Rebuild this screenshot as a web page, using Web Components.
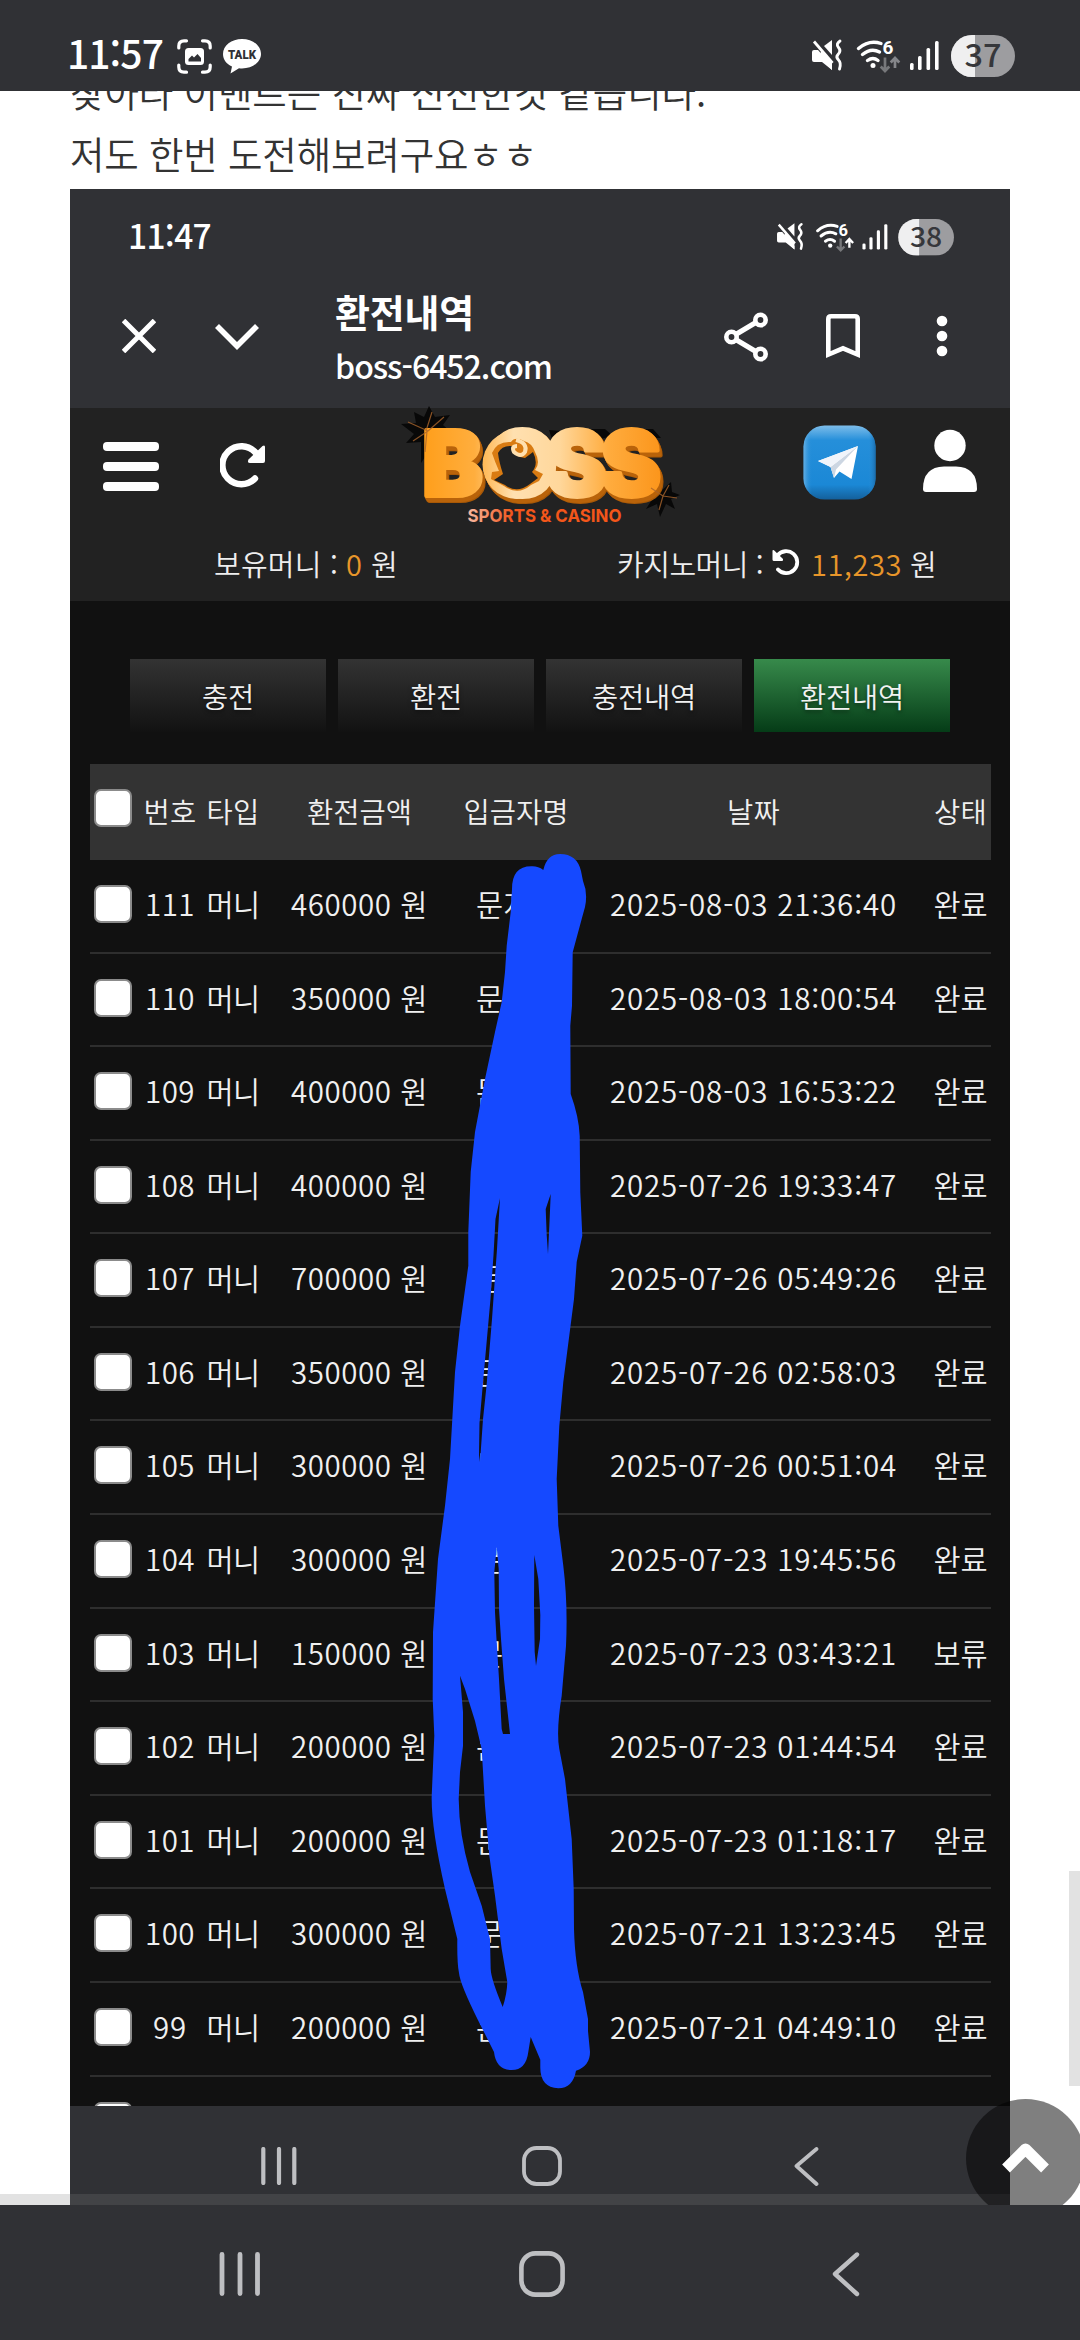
<!DOCTYPE html>
<html lang="ko">
<head>
<meta charset="utf-8">
<title>환전내역</title>
<style>
html,body{margin:0;padding:0;background:#fff}
body{width:1080px;height:2340px;overflow:hidden;font-family:"Noto Sans CJK KR","Noto Sans",sans-serif}
</style>
</head>
<body>
<phone-screen></phone-screen>
<script>
const define = (name, html, setup) => customElements.define(name, class extends HTMLElement {
  connectedCallback() {
    if (this.shadowRoot) return;
    const root = this.attachShadow({mode: 'open'});
    root.innerHTML = typeof html === 'function' ? html(this) : html;
    if (setup) setup(this, root);
  }
});

define('phone-screen', `
<style>
:host{display:flex;flex-direction:column;width:1080px;height:2340px;overflow:hidden;background:#fff}
.view{position:relative;height:2114px;overflow:hidden;background:#fff}
.vbar{position:absolute;left:1069px;top:1780px;width:11px;height:215px;background:#e2e2e2}
.hbar{position:absolute;left:0;top:2103px;width:1010px;height:11px;background:rgba(128,128,128,.23)}
.fab{position:absolute;left:966px;top:2008px;width:119px;height:119px;border-radius:50%;background:rgba(0,0,0,.5)}
.fab svg{display:block}
</style>
<status-bar></status-bar>
<div class="view">
  <post-body></post-body>
  <div class="vbar"></div>
  <div class="hbar"></div>
  <div class="fab"><svg width="119" height="119" viewBox="0 0 119 119"><path d="M40 69.500 L59.500 50 L79 69.500" fill="none" stroke="#fff" stroke-width="11" stroke-linejoin="round"/></svg></div>
</div>
<nav-bar></nav-bar>`);

define('status-bar', `
<style>
:host{display:flex;align-items:flex-start;height:91px;background:#303135;color:#fff}
svg{display:block;flex:none}
.t{font-size:39px;line-height:56px;font-weight:500;margin:24px 0 0 67px}
.i1{margin:39px 0 0 14px}.i2{margin:39px 0 0 11px}
.sp{flex:1}
signal-icons{margin:35px 65px 0 0}
</style>
<fit-text class="t" w="96">11:57</fit-text>
<svg class="i1" width="35" height="35" viewBox="0 0 35 35" fill="none" stroke="#fff" stroke-width="3.200" stroke-linecap="round"><path d="M1.800 9V7Q1.800 1.800 7 1.800H9.500M25.500 1.800H28Q33.200 1.800 33.200 7V9M33.200 26V28Q33.200 33.200 28 33.200H25.500M9.500 33.200H7Q1.800 33.200 1.800 28V26"/><rect x="8" y="9" width="19" height="17" rx="3.500" fill="#fff" stroke="none"/><path d="M11.500 22.500V20L15 16.500L17 18.500L20.500 15L24 19V22.500Z" fill="#303135" stroke="none"/></svg>
<svg class="i2" width="38" height="36" viewBox="0 0 38 36"><path d="M19 0C8.500 0 0 6.500 0 15C0 20.500 3.500 25 9 27.500L7.500 34.500L16 29.300Q17.500 29.500 19 29.500C29.500 29.500 38 23 38 15C38 6.500 29.500 0 19 0Z" fill="#fff"/><text x="5" y="19.500" font-family="Roboto,sans-serif" font-weight="900" font-size="12.500" textLength="28" lengthAdjust="spacingAndGlyphs" fill="#303135">TALK</text></svg>
<span class="sp"></span>
<signal-icons level="37" width="203"></signal-icons>`);

// Mute, Wi-Fi 6, signal and battery drawn on a 203x42 grid.
define('signal-icons', el => {
  const w = +el.getAttribute('width'), up = el.getAttribute('up') || '#85868a';
  return `
<style>:host{display:block}svg{display:block;overflow:visible}</style>
<svg width="${w}" height="${w * 42 / 203}" viewBox="0 0 203 42">
<g fill="#fff">
<path d="M0 17Q0 15 2 15H6L20 31V35L10 27H2Q0 27 0 25Z"/><path d="M12 11L20 5V20Z"/><path d="M7 22L20 35V24L10 14Z"/>
</g>
<path d="M3.500 5.500L22 27" stroke="#303135" stroke-width="2.200"/>
<path d="M2 6.500L20.500 28" stroke="#fff" stroke-width="2.800"/>
<path d="M28 6Q23.500 9 26.500 12.500T26 19.500Q23.500 22 26.500 25T27.500 34" fill="none" stroke="#fff" stroke-width="2.900" stroke-linecap="round"/>
<g fill="none" stroke="#fff" stroke-width="3.400" stroke-linecap="round"><path d="M46.500 13.500Q57 4.500 69 8.500"/><path d="M50.500 19.500Q59 12.500 67.500 17"/><path d="M55.500 25.500Q61 21.500 66 25.500"/></g>
<circle cx="61" cy="30.500" r="2.500" fill="#fff"/>
<text x="70.500" y="19" font-family="Roboto,sans-serif" font-weight="700" font-size="19" fill="#fff">6</text>
<path d="M73 22.500V36M68.700 31.500L73 36L77.300 31.500" fill="none" stroke="#77787b" stroke-width="2.700"/>
<path d="M83 33V23.500M78.700 27.500L83 23L87.300 27.500" fill="none" stroke="${up}" stroke-width="2.700"/>
<g fill="#fff"><rect x="98" y="28" width="3.600" height="7" rx="1.500"/><rect x="106" y="21" width="3.600" height="14" rx="1.500"/><rect x="114.500" y="13" width="3.600" height="22" rx="1.500"/><rect x="123" y="6" width="3.600" height="29" rx="1.500"/></g>
<clipPath id="b"><rect x="139" y="0" width="64" height="42" rx="21"/></clipPath>
<g clip-path="url(#b)"><rect x="139" width="64" height="42" fill="#9d9da0"/><rect x="139" width="24" height="42" fill="#efeff0"/></g>
<text x="171" y="32" text-anchor="middle" textLength="37" lengthAdjust="spacingAndGlyphs" font-family="Noto Sans CJK KR,sans-serif" font-weight="500" font-size="31" fill="#36373b">${el.getAttribute('level')}</text>
</svg>`;
});

define('nav-bar', `
<style>
:host{display:flex;height:135px;background:#303135}
svg{display:block;flex:none}
.r{margin:46px 0 0 219px}.h{margin:46px 0 0 258px}.b{margin:46px 0 0 265px}
</style>
<svg class="r" width="42" height="46" viewBox="0 0 42 46"><path d="M3 3.500V42.500M21 3.500V42.500M38.500 3.500V42.500" stroke="#bebfc2" stroke-width="4.800" stroke-linecap="round"/></svg>
<svg class="h" width="46" height="46" viewBox="0 0 46 46"><rect x="2.400" y="2.400" width="41.200" height="41.200" rx="14" fill="none" stroke="#bebfc2" stroke-width="4.600"/></svg>
<svg class="b" width="32" height="46" viewBox="0 0 32 46"><path d="M27 3.500L5 23L27 43" fill="none" stroke="#bebfc2" stroke-width="4.400" stroke-linecap="round" stroke-linejoin="round"/></svg>`);

define('post-body', `
<style>
:host{display:block;padding-left:70px}
.p{color:#333;font-size:37.500px;line-height:62px;font-weight:350;display:block}
.a{margin-top:-31px}
captured-shot{margin-top:5px}
</style>
<div class="p a"><fit-text w="636">찾아라 이벤트는 진짜 신선한것 같습니다.</fit-text></div>
<div class="p"><fit-text w="467">저도 한번 도전해보려구요ㅎㅎ</fit-text></div>
<captured-shot></captured-shot>`);

define('captured-shot', `
<style>
:host{display:flex;flex-direction:column;position:relative;width:940px;height:2016px;background:#111;overflow:hidden}
.body{height:1505px;overflow:hidden}
redaction-stroke{position:absolute;left:0;top:0}
</style>
<shot-toolbar></shot-toolbar>
<site-header></site-header>
<div class="body"><tab-row></tab-row><history-table></history-table></div>
<shot-nav></shot-nav>
<redaction-stroke></redaction-stroke>`);

define('shot-toolbar', `
<style>
:host{display:flex;flex-direction:column;height:219px;background:#303135;color:#fff}
svg{display:block;flex:none}
.s{display:flex;height:90px;align-items:flex-start}
.t{font-size:33.500px;line-height:48px;font-weight:500;margin:22px 0 0 58px}
.s signal-icons{margin:30px 56px 0 auto}
.b{display:flex;align-items:flex-start}
.x{margin:40px 0 0 52px}.v{margin:44px 0 0 58px}
.n{display:flex;flex-direction:column;margin:4px 0 0 75px;width:250px}
.n1{font-size:38px;line-height:56px;font-weight:700}
.n2{font-size:32px;line-height:46px;font-weight:500;margin-top:3px}
.sh{margin:32px 0 0 139px}.bk{margin:35px 0 0 58px}.d{margin:36px 0 0 76px}
</style>
<div class="s"><fit-text class="t" w="83">11:47</fit-text><signal-icons level="38" width="177" up="#fff"></signal-icons></div>
<div class="b">
<svg class="x" width="34" height="34" viewBox="0 0 34 34"><path d="M1.500 1.500L32.500 32.500M32.500 1.500L1.500 32.500" stroke="#fff" stroke-width="5"/></svg>
<svg class="v" width="46" height="28" viewBox="0 0 46 28"><path d="M3 3L23 23L43 3" fill="none" stroke="#fff" stroke-width="5.600"/></svg>
<div class="n"><fit-text class="n1" w="139">환전내역</fit-text><fit-text class="n2" w="217">boss-6452.com</fit-text></div>
<svg class="sh" width="44" height="52" viewBox="0 0 44 52"><g fill="none" stroke="#fff" stroke-width="4.600"><path d="M7.500 26L36 9M7.500 26L36 43" stroke-width="5"/><g fill="#303135"><circle cx="7.500" cy="26" r="5.200"/><circle cx="36.500" cy="9" r="5.200"/><circle cx="36.500" cy="43" r="5.200"/></g></g></svg>
<svg class="bk" width="34" height="45" viewBox="0 0 34 45"><path d="M2.300 40.500V5Q2.300 2.300 5 2.300H29Q31.700 2.300 31.700 5V40.500L17 34.300Z" fill="none" stroke="#fff" stroke-width="4.600"/></svg>
<svg class="d" width="12" height="42" viewBox="0 0 12 42" fill="#fff"><circle cx="6" cy="6" r="5.300"/><circle cx="6" cy="21" r="5.300"/><circle cx="6" cy="36" r="5.300"/></svg>
</div>`);

define('site-header', `
<style>
:host{display:flex;flex-direction:column;height:193px;background:#222;color:#eee}
svg{display:block;flex:none}
.top{display:flex;align-items:flex-start;height:118px}
.m{margin:34px 0 0 33px}.r{margin:35px 0 0 61px}
.l{margin:-3px 0 0 133px;overflow:visible}
.tg{margin:17px 0 0 121px}.u{margin:21px 0 0 47px}
.money{display:flex;align-items:flex-start;font-size:29px;line-height:44px;font-weight:350;padding-top:15px}
.o{color:#e8962a}
.a{margin-left:144px}.a0{margin-left:8px}.a1{margin-left:9px}
.b{margin-left:219px}.bi{margin:8px 0 0 9px}.b0{margin-left:11px}.b1{margin-left:8px}
</style>
<div class="top">
<svg class="m" width="56" height="49" viewBox="0 0 56 49" fill="#fff"><rect width="56" height="9" rx="4"/><rect y="20" width="56" height="9" rx="4"/><rect y="40" width="56" height="9" rx="4"/></svg>
<svg class="r" width="46" height="46" viewBox="0 0 46 46"><path d="M35 35.500A19 19 0 1 1 35.500 9.500" fill="none" stroke="#fff" stroke-width="6.400" stroke-linecap="round"/><path d="M45 4Q45 1.500 42.500 3L28.500 16.500Q27 20 30 20H43Q45 20 45 18Z" fill="#fff"/></svg>
<brand-logo class="l"></brand-logo>
<svg class="tg" width="73" height="75" viewBox="0 0 73 75">
<defs><linearGradient id="g" x1="0" y1="0" x2="0" y2="1"><stop offset="0" stop-color="#7dbdea"/><stop offset=".2" stop-color="#258fda"/><stop offset=".8" stop-color="#1b88d6"/><stop offset="1" stop-color="#14609b"/></linearGradient><linearGradient id="s" x1="0" x2="1" y1="0" y2="0"><stop offset="0" stop-color="#a9d4f2" stop-opacity=".5"/><stop offset=".12" stop-color="#2b90d9" stop-opacity="0"/><stop offset=".9" stop-color="#2b90d9" stop-opacity="0"/><stop offset="1" stop-color="#1a6cab"/></linearGradient></defs>
<rect x=".5" y=".5" width="72" height="74" rx="21" fill="url(#g)"/><rect x=".5" y=".5" width="72" height="74" rx="21" fill="url(#s)"/>
<path d="M15 36L55 21L48.500 54L36.500 46.500L31 53L27.500 42Z" fill="#fff"/><path d="M27.500 42L55 21L33 44.500L31 53Z" fill="#ccd6e2"/><path d="M15 36L55 21L27.500 42Z" fill="#f0f4fa"/></svg>
<svg class="u" width="54" height="63" viewBox="0 0 54 63" fill="#fff"><circle cx="27" cy="16.500" r="15.700"/><path d="M0 60Q0 38 21 37.500H33Q54 38 54 60Q54 63 51 63H3Q0 63 0 60Z"/></svg>
</div>
<div class="money">
<fit-text class="a" w="124">보유머니 :</fit-text><fit-text class="o a0" w="16">0</fit-text><fit-text class="a1" w="27">원</fit-text>
<fit-text class="b" w="146">카지노머니 :</fit-text>
<svg class="bi" width="28" height="27" viewBox="0 0 28 27"><path d="M5.500 6.500A11 11 0 1 1 6 20.500" fill="none" stroke="#fff" stroke-width="3.800" stroke-linecap="round"/><path d="M.5 1.500Q1 .5 2 1.300L11 10Q11.500 12 10 12H2Q.5 12 .5 10.500Z" fill="#fff"/></svg>
<fit-text class="o b0" w="91">11,233</fit-text><fit-text class="b1" w="27">원</fit-text>
</div>`);

define('brand-logo', `
<style>:host{display:block;flex:none}svg{display:block;overflow:visible}.face{filter:drop-shadow(1px 2px 0 #b9630a) drop-shadow(1px 2px 0 #b9630a) drop-shadow(1px 1px 0 #a85806)}</style>
<svg width="283" height="121" viewBox="398 405 283 121">
<defs>
<linearGradient id="f" gradientUnits="userSpaceOnUse" x1="425" x2="668" y1="0" y2="0"><stop offset="0" stop-color="#ff9f1c"/><stop offset=".2" stop-color="#ffae3e"/><stop offset=".36" stop-color="#ffe0b0"/><stop offset=".55" stop-color="#ffd79b"/><stop offset=".75" stop-color="#ffac3e"/><stop offset="1" stop-color="#fb9216"/></linearGradient>
<linearGradient id="t" gradientUnits="userSpaceOnUse" x1="467" x2="540" y1="0" y2="0"><stop offset="0" stop-color="#f7b9a0"/><stop offset=".6" stop-color="#f2571d"/><stop offset="1" stop-color="#f4561a"/></linearGradient>
</defs>
<g fill="#080808"><path d="M428 406L434 417L449 415L442 425L450 432L440 436L441 452L431 447L420 463L420 442L405 443L413 434L400 424L415 423L413 412L423 417Z"/>
<path d="M548 430L560 431L570 445H553ZM590 429H604L612 436L595 440ZM640 429H652L660 438H645Z"/>
<path d="M670 482L671 492L679 495L670 499L674 509L665 504L659 517L656 504L645 509L652 498L650 488L660 491Z"/></g>
<g class="face">
<text x="421 486 545 599.500" y="496" font-family="Inter,sans-serif" font-weight="900" font-size="91" stroke-linejoin="round" stroke-width="4" fill="url(#f)" stroke="url(#f)">BOSS</text>
<path fill-rule="evenodd" fill="url(#f)" d="M516 430A34.500 34.500 0 0 1 516 499A34.500 34.500 0 0 1 516 430Z"/>
</g>
<path d="M425 431L431 412M427 431L443 417M427 431L407 422M427 431L412 441M426 431L424 452M662 496L668 485M662 496L676 498M662 496L658 510M662 496L650 488" stroke="#a8642c" stroke-width="1.200" opacity=".8"/>
<path d="M491 453Q496 441 510 442Q514 436 523 441Q531 443 534 452Q540 463 534 470L542 474L538 481L530 485Q517 496 503 486L490 479L491 472L498 471Q494 462 491 453Z" fill="#d97b12"/>
<path d="M497 453Q501 445 511 446Q514 458 524 458L532 452Q538 464 531 472L537 478L529 484Q516 494 504 485L493 480L502 474Q498 462 497 453Z" fill="#222"/>
<path d="M515 440Q527 443 524 452Q520 458 513 452Q510 446 516 446" fill="none" stroke="#ffe0b0" stroke-width="4"/>
<text x="466.500" y="521.500" font-family="Inter,sans-serif" font-weight="700" font-size="18" textLength="154" lengthAdjust="spacingAndGlyphs" fill="url(#t)">SPORTS &amp; CASINO</text>
</svg>`);

define('tab-row', `
<style>
:host{display:flex;gap:12px;padding:58px 60px 0}
div{flex:1;height:73px;display:flex;justify-content:center;background:linear-gradient(#333,#121212);color:#f2f2f2;font-size:28.500px;line-height:73px;font-weight:350;text-shadow:0 2px 4px rgba(0,0,0,.5)}
.on{background:linear-gradient(#378a4b,#053c17)}
</style>
<div><fit-text w="52">충전</fit-text></div><div><fit-text w="52">환전</fit-text></div><div><fit-text w="104">충전내역</fit-text></div><div class="on"><fit-text w="104">환전내역</fit-text></div>`);

const records = [
  [111,460000,'2025-08-03 21:36:40'],[110,350000,'2025-08-03 18:00:54'],[109,400000,'2025-08-03 16:53:22'],
  [108,400000,'2025-07-26 19:33:47'],[107,700000,'2025-07-26 05:49:26'],[106,350000,'2025-07-26 02:58:03'],
  [105,300000,'2025-07-26 00:51:04'],[104,300000,'2025-07-23 19:45:56'],[103,150000,'2025-07-23 03:43:21','보류'],
  [102,200000,'2025-07-23 01:44:54'],[101,200000,'2025-07-23 01:18:17'],[100,300000,'2025-07-21 13:23:45'],
  [99,200000,'2025-07-21 04:49:10']];

define('history-table', () => `
<style>
:host{display:block;width:901px;margin:32px 0 0 20px;color:#f0f0f0;font-size:29.500px;font-weight:350}
.row,.head{display:grid;grid-template-columns:48px 64px 62px 191px 122px 353px 61px;box-sizing:border-box;justify-items:center;align-items:start}
.head{height:96px;background:#333;line-height:93px;font-size:28.500px}
.row{height:93.580px;border-bottom:2px solid #2e2e2e;line-height:87px}
i{justify-self:start;box-sizing:border-box;width:38px;height:38px;border-radius:7px;background:#fff;border:2.500px solid #8b8b8b;margin:25px 0 0 4px}
.n{justify-self:start;margin-left:21px}
</style>
<div class="head"><i></i><fit-text w="53">번호</fit-text><fit-text w="53">타입</fit-text><fit-text w="105">환전금액</fit-text><fit-text w="105">입금자명</fit-text><fit-text w="53">날짜</fit-text><fit-text w="53">상태</fit-text></div>
${records.map(([no, sum, date, state], k) => `<div class="row"><i></i><fit-text w="${no > 99 ? 50 : 34}">${no}</fit-text><fit-text w="53">머니</fit-text><fit-text w="137">${sum} 원</fit-text><span class="n">${k ? '문' : '문지'}</span><fit-text w="287">${date}</fit-text><fit-text w="54">${state || '완료'}</fit-text></div>`).join('')}
<div class="row"><i></i></div>`);

define('shot-nav', `
<style>
:host{display:flex;height:99px;background:#303135;flex:none}
svg{display:block;flex:none}
.r{margin:41px 0 0 190px}.h{margin:40px 0 0 224px}.b{margin:41px 0 0 230px}
</style>
<svg class="r" width="38" height="38" viewBox="0 0 38 38"><path d="M3.300 2V36M19 2V36M34.300 2V36" stroke="#bebfc2" stroke-width="4.200" stroke-linecap="round"/></svg>
<svg class="h" width="40" height="40" viewBox="0 0 40 40"><rect x="2" y="2" width="36" height="36" rx="12.500" fill="none" stroke="#bebfc2" stroke-width="3.800"/></svg>
<svg class="b" width="28" height="40" viewBox="0 0 28 40"><path d="M24.500 2L4.500 19L24.500 37" fill="none" stroke="#bebfc2" stroke-width="3.800" stroke-linecap="round" stroke-linejoin="round"/></svg>`);

// Freehand marker over the depositor column; the inner loops are gaps between strokes.
define('redaction-stroke', `
<style>:host{display:block;pointer-events:none}svg{display:block}</style>
<svg width="940" height="2016" viewBox="70 190 940 2016"><path fill="#1549ff" fill-rule="evenodd" d="
M512 890Q512 867 531.700 867.300Q538 867 543.300 871Q547 855 560 855Q577 855 581 872L583 882Q588 894 585 908L581.700 920L572.700 953.300L572 1006.700L570.300 1026.700L570.700 1095Q579 1118 579.700 1137L580.300 1193.300L582.300 1236.700L576.700 1263L574 1300L563.300 1383L559.300 1427L556.700 1480L558.300 1526.700L563.300 1566.700Q568 1605 566 1647L561.700 1696.700Q556 1732 559.300 1750L565 1780L571.700 1840L573.700 1890L574 1930Q575 1968 583 1993L588 2020V2032L590 2053Q590 2067 576 2071.700Q573 2089 558.300 2089.300Q540 2088 540.300 2068V2060.700L530.700 2038L528.300 2053Q526 2071 511.700 2071Q496 2071 494 2053L478.300 2021.700Q460 1985 459 1974Q457 1965 457.300 1940L445 1890Q431 1828 431.700 1796.700L434.300 1736.700L432.700 1700L433 1633L438 1560L445 1506.700L450 1460L455 1373L460 1326.700L468.300 1266.700V1233L470.700 1173L475 1133L485 1080L495 1033L501.700 1003L505 973L506.700 946.700L510.700 913Z
M500 1199L495.500 1220L493.500 1256L490.500 1300L482.700 1387L479.500 1424L479 1456L480 1463L483 1420L486.500 1387L492 1320L497 1250Z
M550.700 1195L545.700 1210L546.700 1236L548 1255L549.500 1223Z
M496.700 1548L494.300 1573L495 1613L496.500 1640L499 1680L501.700 1730L503 1735H510L504 1680L501 1640L499 1610L498.700 1570Z
M534.300 1556L534 1606L534.700 1653L536 1666.700L540 1640L540.300 1616L538.300 1580Z
M460 1676.700L463 1713V1747L460 1773L458.700 1800Q459 1835 470 1873L481.700 1906.700L490 1940L490.700 1970Q491 1980 502.700 2008Q507 1995 507.300 1983L501.700 1950L495 1896.700L489.300 1856.700L485 1806.700L481.700 1750L475 1722L465 1690Z"/></svg>`);

// One text run spread over a fixed advance width through its letter spacing.
define('fit-text', `
<style>:host{display:inline-block;white-space:nowrap}span{display:inline-block}</style><span><slot></slot></span>`,
(el, root) => {
  const span = root.querySelector('span'), w = +el.getAttribute('w'), n = el.textContent.length;
  span.style.letterSpacing = (w - span.getBoundingClientRect().width) / n + 'px';
  el.style.width = w + 'px';
});
</script>
</body>
</html>
